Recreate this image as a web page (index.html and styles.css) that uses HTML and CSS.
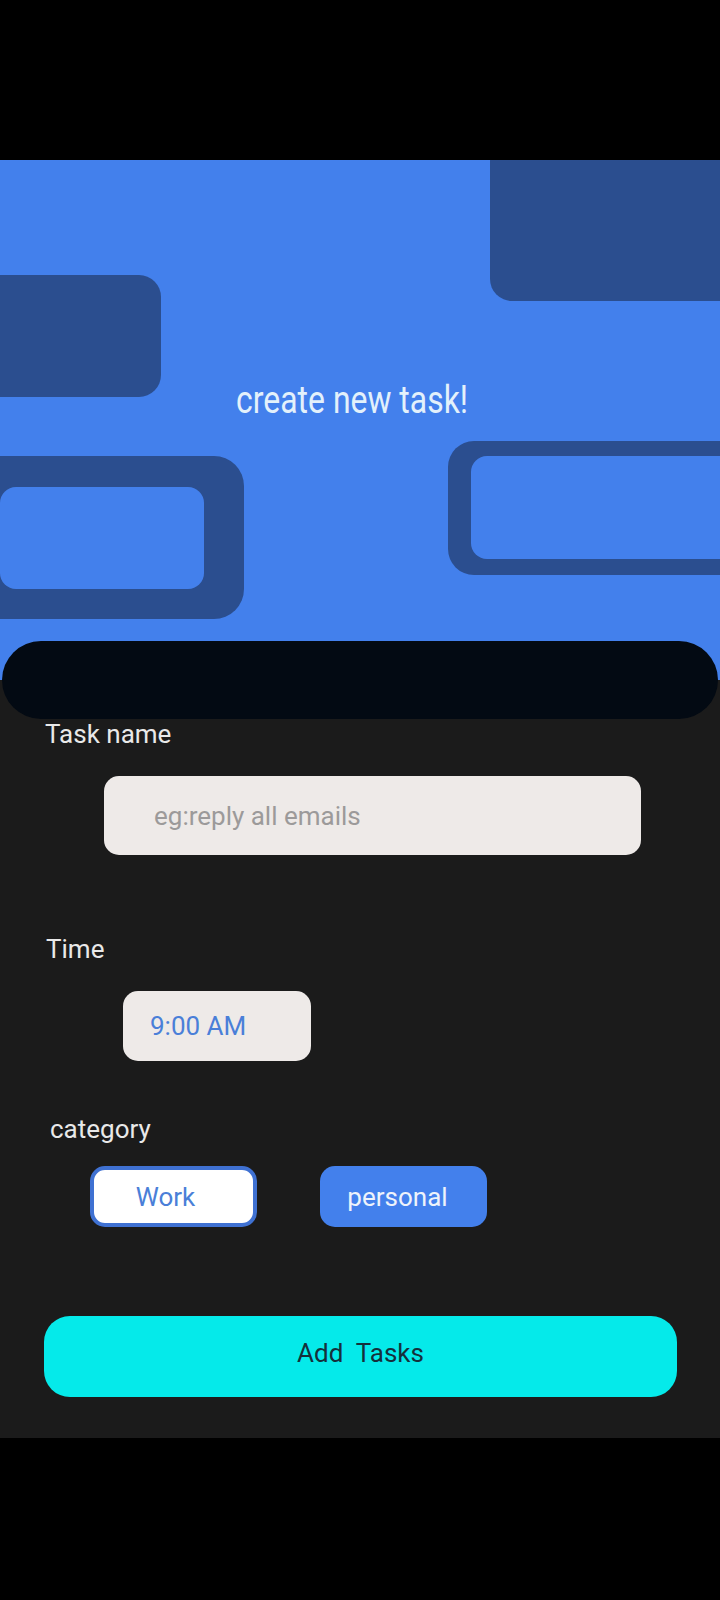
FILE: index.html
```html
<!DOCTYPE html>
<html>
<head>
<meta charset="utf-8">
<link rel="stylesheet" href="styles.css">
</head>
<body>
<div class="screen">
  <div class="topbar"></div>
  <header class="hero">
    <div class="shape shape-tr"></div>
    <div class="shape shape-l"></div>
    <div class="shape-outline shape-bl"><div class="hole hole-bl"></div></div>
    <div class="shape-outline shape-r"><div class="hole hole-r"></div></div>
    <h1 class="title">create new task!</h1>
  </header>
  <div class="bar-row"><div class="bar"></div></div>
  <main class="form">
    <div class="label label-task">Task name</div>
    <div class="input input-task"><span class="placeholder">eg:reply all emails</span></div>
    <div class="label label-time">Time</div>
    <div class="input input-time"><span class="time-value">9:00 AM</span></div>
    <div class="label label-cat">category</div>
    <div class="chips">
      <button class="chip chip-work">Work</button>
      <button class="chip chip-personal">personal</button>
    </div>
    <button class="add-btn">Add&nbsp; Tasks</button>
  </main>
</div>
</body>
</html>
```
FILE: styles.css
```css
html, body {
  margin: 0;
  padding: 0;
  background: #000;
}
body {
  font-family: Roboto, "Noto Sans", "Liberation Sans", sans-serif;
  width: 720px;
  height: 1600px;
  overflow: hidden;
}
.screen {
  display: flex;
  flex-direction: column;
}
.topbar {
  height: 160px;
  background: #000;
}
.hero {
  position: relative;
  height: 481px;
  background: #4380ec;
  overflow: hidden;
  display: flex;
  justify-content: center;
}
.shape {
  position: absolute;
  background: #2b4e8f;
}
.shape-tr {
  left: 490px;
  top: -20px;
  width: 260px;
  height: 161px;
  border-radius: 22px;
}
.shape-l {
  left: -40px;
  top: 115px;
  width: 201px;
  height: 122px;
  border-radius: 22px;
}
.shape-outline {
  position: absolute;
  background: #2b4e8f;
  box-sizing: border-box;
  display: flex;
}
.hole {
  background: #4380ec;
  flex: 1;
}
.shape-bl {
  left: -40px;
  top: 296px;
  width: 284px;
  height: 163px;
  padding: 31px 40px 30px 40px;
  border-radius: 30px;
}
.hole-bl {
  border-radius: 16px;
}
.shape-r {
  left: 448px;
  top: 281px;
  width: 340px;
  height: 134px;
  padding: 15px 23px 16px 23px;
  border-radius: 26px;
}
.hole-r {
  border-radius: 16px;
}
.title {
  position: relative;
  margin: 220px 16px 0 0;
  height: 40px;
  font-family: Roboto, "Noto Sans", sans-serif;
  font-weight: 400;
  font-size: 38px;
  line-height: 40px;
  white-space: nowrap;
  color: #e3f1fb;
  transform: scaleX(0.84);
}
.bar-row {
  height: 78px;
  background: linear-gradient(#4380ec 0, #4380ec 50%, #1b1b1b 50%, #1b1b1b 100%);
  padding: 0 2px;
}
.bar {
  height: 78px;
  background: #030a13;
  border-radius: 39px;
}
.form {
  background: #1b1b1b;
  height: 719px;
  box-sizing: border-box;
  display: flex;
  flex-direction: column;
  align-items: flex-start;
}
.label {
  font-size: 26px;
  line-height: 30px;
  color: #e9e9e9;
}
.label-task {
  margin: 0 0 0 45px;
}
.input {
  background: #eeeae8;
  border-radius: 15px;
  display: flex;
  align-items: center;
  box-sizing: border-box;
}
.input-task {
  margin: 27px 0 0 104px;
  width: 537px;
  height: 79px;
  padding-left: 50px;
}
.placeholder {
  font-size: 26px;
  color: #9c9a9a;
}
.label-time {
  margin: 79px 0 0 46px;
}
.input-time {
  margin: 27px 0 0 123px;
  width: 188px;
  height: 70px;
  padding-left: 27px;
}
.time-value {
  font-size: 26px;
  color: #4a7fd8;
}
.label-cat {
  margin: 53px 0 0 50px;
}
.chips {
  margin: 22px 0 0 90px;
  display: flex;
  gap: 63px;
}
.chip {
  width: 167px;
  height: 61px;
  border-radius: 15px;
  font-family: Roboto, "Noto Sans", sans-serif;
  font-size: 26px;
  padding: 0;
  box-sizing: border-box;
}
.chip-work {
  background: #ffffff;
  border: 4px solid #3f71d2;
  color: #4a7fd8;
  padding-right: 16px;
}
.chip-personal {
  background: #4380ec;
  border: none;
  color: #eef3fb;
  padding-right: 12px;
}
.add-btn {
  margin: 89px 0 0 44px;
  width: 633px;
  height: 81px;
  border: none;
  border-radius: 26px;
  background: #05eaea;
  color: #15303c;
  font-family: Roboto, "Noto Sans", sans-serif;
  font-size: 26px;
  padding: 0 0 8px 0;
}
```
